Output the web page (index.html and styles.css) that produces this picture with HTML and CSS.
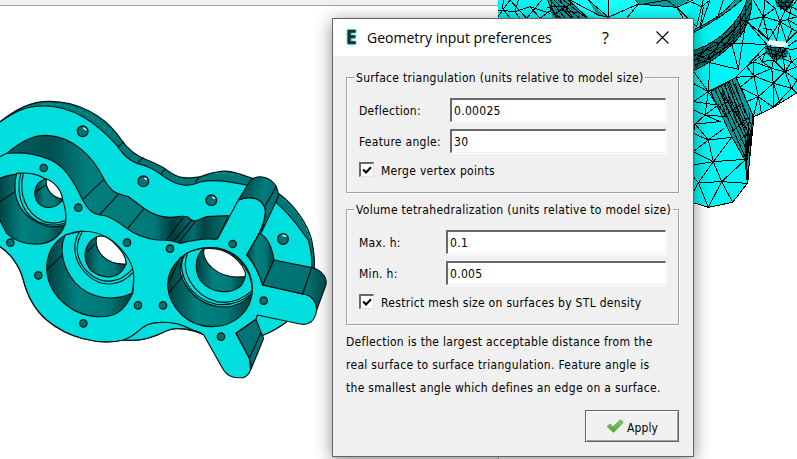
FILE: index.html
```
<!DOCTYPE html>
<html lang="en">
<head>
<meta charset="utf-8">
<title>Geometry input preferences</title>
<link rel="stylesheet" href="styles.css">
</head>
<body>
<svg class="scene" viewBox="0 0 2391 1377" aria-hidden="true">
  <defs>
    <linearGradient id="wall" x1="0" x2="1"><stop offset="0" stop-color="#003f3f"/><stop offset=".35" stop-color="#008080"/><stop offset=".7" stop-color="#007777"/><stop offset="1" stop-color="#003b3b"/></linearGradient>
    <linearGradient id="pocket" x1="0" x2="1"><stop offset="0" stop-color="#006060"/><stop offset=".2" stop-color="#005050"/><stop offset=".36" stop-color="#007d7d"/><stop offset=".66" stop-color="#007b7b"/><stop offset=".75" stop-color="#003b3b"/><stop offset=".84" stop-color="#007070"/><stop offset=".89" stop-color="#004545"/><stop offset="1" stop-color="#007272"/></linearGradient>
    <linearGradient id="arm" x1="0" y1="0" x2="1" y2=".5"><stop offset="0" stop-color="#003c3c"/><stop offset=".6" stop-color="#007b7b"/><stop offset="1" stop-color="#006d6d"/></linearGradient>
    <linearGradient id="cap" x1="0" x2="1"><stop offset="0" stop-color="#007b7b"/><stop offset="1" stop-color="#004a4a"/></linearGradient>
  </defs>
  <path class="bar" d="M0 0H1494V15H0z"/><path class="bar-line" d="M0 16.5H1494"/>
  <path class="bar" d="M996 1372H1494V1377H996z"/><path class="bar-line" d="M1495 1371V1377"/>

  <g class="part">
    <path class="rim" d="M-6 370C50 325 95 303 150 304C240 305 310 350 350 400C372 432 390 455 420 470C450 485 480 494 500 510C530 532 550 537 585 532C605 533 620 520 650 516C690 507 720 523 765 538L835 580C890 620 925 680 935 720C944 765 945 790 942 810L860 965C840 980 815 995 790 1005L610 1003C580 990 530 978 500 992C455 1015 410 1025 370 1020C290 1038 200 1010 140 960C100 925 80 880 70 840C60 800 30 755 -6 737z"/>
    <path class="face" d="M-6 370C50 330 80 318 130 318C220 317 290 370 350 435C370 465 385 480 410 490C460 500 480 525 515 544C550 562 575 557 600 546C650 535 700 548 740 555L825 605C880 650 915 710 925 720C935 760 937 785 935 800L860 965C840 980 815 995 790 1005L610 1003C590 990 530 978 500 992C455 1015 410 1025 370 1020C290 1038 200 1010 140 960C100 925 80 880 70 840C60 800 30 755 -6 737z"/>
    <path class="line" d="M372 425L352 442M430 472L412 490M494 508L482 524M598 532L585 546M370 1020C420 1005 420 967 480 967C540 964 560 985 610 1003"/>
    <path class="glint" d="M125 313C230 306 290 355 344 412M645 520L720 525M850 597C890 630 920 675 936 728"/>
    <path class="wall pocket" d="M20 460C75 415 105 406 140 406C220 410 280 470 312 538C335 580 350 580 385 590C430 620 450 650 510 652C540 650 555 645 565 652C580 672 590 660 620 650L685 647L652 718C610 712 570 722 540 730C520 722 510 720 470 720C430 715 400 700 380 685C340 655 320 645 300 645C270 640 260 620 248 600C220 540 190 490 140 475C100 460 60 456 20 460z"/>
    <path class="line" d="M20 460L-4 472M312 538L248 598M355 583L298 645M433 625L383 685M550 652L498 722M575 660L520 725M585 665L536 729"/>

    <path class="wall" d="M-6 537C60 510 130 515 165 565C205 620 205 680 175 705C145 740 70 745 20 700L-6 650z"/>
    <path class="line" d="M0 605L42 577"/>
    <path class="face" d="M50 520C40 560 43 600 70 635C105 675 155 690 196 674C204 620 180 580 160 557C130 527 100 515 50 520z"/>
    <path class="line" d="M62 520C45 590 72 658 135 672Q170 680 196 668M70 520C55 580 76 640 130 664Q165 676 198 661"/>
    <path class="wall" d="M138 537C102 545 97 585 114 608C130 627 165 630 188 600L187 595z"/>
    <path class="void" d="M138 537C137 570 157 590 187 598C186 570 160 543 138 537z"/>
    <path class="line" d="M105 576L137 556"/>

    <path class="wall" d="M140 800C143 735 190 697 240 694C310 694 365 750 385 780C404 815 403 845 398 880C370 940 340 953 290 950C210 945 140 880 140 800z"/>
    <path class="face" d="M195 705C175 750 190 805 225 848C270 897 340 905 396 880C406 825 402 800 378 765C345 720 300 690 240 694z"/>
    <path class="line" d="M140 810L185 767M238 695C210 745 228 795 268 830C310 865 365 856 398 818M246 697C218 745 234 793 272 824C312 855 362 848 396 808"/>
    <path class="wall" d="M290 710C245 735 248 785 275 813C310 838 360 840 378 792z"/>
    <path class="void" d="M290 710C280 755 320 795 378 792C382 760 330 710 305 708z"/>
    <path class="line" d="M262 755L284 733"/>

    <path class="plate" d="M610 1003L665 1100C680 1130 700 1135 730 1133C750 1126 760 1100 748 1075L708 1000L768 958L772 945L900 972C925 977 945 965 950 930C950 905 935 885 908 882L788 855C775 815 760 785 740 765L775 705C783 688 805 640 793 620C780 592 750 587 715 600L652 718L560 760L500 900z"/>
    <path class="wall arm" d="M715 600L752 540C775 523 810 528 829 560Q836 575 834 592L783 700C783 688 805 640 793 620C780 592 750 587 715 600z"/>
    <path class="line" d="M829 560L795 618"/>
    <path class="wall" d="M778 700C810 715 818 755 822 780L788 855C775 815 760 785 740 765z"/>
    <path class="wall flat" d="M822 780L935 803L908 882L788 855z"/>
    <path class="wall cap" d="M935 803C970 812 985 838 976 860L950 930C950 905 935 885 908 882z"/>
    <path class="wall flat" d="M708 1000L768 958L786 1005L791 1015L752 1110L748 1075z"/>
    <path class="line" d="M783 998L748 1075"/>
    <path class="line" d="M652 718L715 600C750 587 780 592 793 620C805 640 783 688 775 705L740 765C760 785 775 815 788 855L908 882C935 885 950 905 950 930C945 965 925 977 900 972L772 945L768 958L708 1000L748 1075C760 1100 750 1126 730 1133C700 1135 680 1130 665 1100L610 1003"/>

    <path class="wall" d="M503 860C500 790 565 743 630 743C705 743 757 800 757 867C757 935 700 980 635 980C565 980 510 925 503 860z"/>
    <path class="face" d="M557 761C530 800 538 830 562 862C600 918 690 950 755 884C765 810 700 742 630 743Q588 744 557 761z"/>
    <path class="line" d="M505 850L542 770M551 765C530 820 568 895 650 913Q710 920 755 880M563 758C540 815 578 885 650 905Q705 916 757 872M505 880L552 824"/>
    <path class="wall" d="M611 746C582 770 585 815 600 840C630 880 690 885 722 858Q734 845 736 825z"/>
    <path class="void" d="M613 746C600 780 650 840 733 830C750 820 700 735 613 746z"/>
    <g class="holes">
      <circle cx="248" cy="394" r="16"/><circle cx="430" cy="544" r="16"/><circle cx="634" cy="601" r="16"/><circle cx="849" cy="717" r="16"/>
      <circle cx="131" cy="504" r="11"/><circle cx="235" cy="623" r="11"/><circle cx="698" cy="732" r="11"/><circle cx="510" cy="746" r="11"/><circle cx="489" cy="916" r="11"/><circle cx="791" cy="902" r="11"/><circle cx="663" cy="1010" r="11"/><circle cx="31" cy="728" r="11"/><circle cx="115" cy="826" r="11"/><circle cx="381" cy="728" r="11"/><circle cx="414" cy="916" r="11"/><circle cx="250" cy="970" r="11"/>
    </g>
    <path class="spark" d="M250 383l9 7M433 534l8 5M637 591l8 5M847 706l12 3"/>
  </g>

  <g class="mesh" transform="translate(1470 0)">
    <path class="sheet" d="M24 0H921V280L850 322L790 350L772 550L728 607L655 622L600 605V100H24z"/>
    <path class="glow" d="M205 0H610L580 70H350z"/>
    <path class="shade" d="M172 0L190 60H300L240 0zM295 0L350 55L320 45zM435 0L450 14L560 22L598 0zM610 98Q700 50 755 0H735Q690 55 610 90z"/>
    <path class="deep" d="M610 152Q690 125 735 65Q762 30 770 0H786Q785 80 725 135Q670 185 610 213z"/>
    <path class="shade side" d="M662 275L738 232L790 345L772 550L765 480L725 410z"/>
    <path class="deep" d="M826 140L890 145L897 160L880 178L850 180L827 158zM855 0H910L905 20L885 32L860 18z"/>
    <path class="hole" d="M835 120L890 126L896 138L870 142L832 132z"/>
    <path class="edge" d="M24 50L60 0L110 55L155 0M24 30L75 35L120 20L180 40M40 0L38 25L60 55M85 0L75 35L90 55M120 20L150 55L190 25M210 0L250 55M172 0L200 55M182 0L225 55M192 0L245 55M204 0L270 55M220 0L290 55M235 0L300 60M178 15L205 55M185 5L182 35L215 55M172 22L230 18L210 30L260 38M190 45L245 10M240 0L325 45L355 52L445 12L560 22L610 0M295 0L355 52L355 0M435 0L450 14L530 0L560 22M445 12L410 55M560 22L580 55M560 22L620 80L640 0M590 0L635 20L660 0M610 90Q690 55 735 0M610 98Q700 50 755 0M640 20L630 85L660 0M680 60L700 0"/>
    <path class="edge" d="M610 152Q690 125 735 65Q762 30 770 0M786 0Q785 80 725 135Q670 185 610 213M610 168Q690 140 740 80L782 10M610 182Q690 155 740 100L780 40M610 198Q690 165 735 115L775 60M610 160L655 180M640 145L620 205M670 128L725 130M655 150L690 160M700 110L660 180M735 65L730 125M750 45L750 110M765 15L768 75M615 180L670 128M640 190L710 105M690 160L760 50M740 65L775 60"/>
    <path class="edge" d="M725 130L830 133L768 62L745 208L660 188L610 178M725 130L745 208M660 188L655 275L610 213M655 180L725 130M768 62L820 50L790 0M768 62L835 120L820 50L825 0L855 25L820 50M820 50L870 65L855 25M870 65L835 120M870 65L890 126L921 95L870 65L921 50L885 32L870 65M835 120L805 90L820 50M890 126L905 90L895 60L921 75M895 60L905 20L921 0M905 20L921 30M845 90L860 120L870 65M845 90L820 85M855 0L885 32L910 0M860 18L905 20M865 0L900 25M858 8L908 8M875 0L872 28L895 0M885 0L890 30L905 5M895 138L921 120M897 150L921 145"/>
    <path class="edge" d="M655 275L738 232L826 140M738 232L792 228L790 185L830 155M738 232L750 262L792 228L805 290L755 265M790 185L770 200L792 228L850 250L845 205L790 185M845 205L792 228M805 290L850 250L850 322L805 290L790 350M805 290L770 305L755 265M805 290L815 342M850 250L885 215L845 205L850 180L885 215L921 200M850 250L905 265L885 215L921 240M850 250L870 310M850 322L905 265L921 280M905 265L921 240M850 180L815 185L845 205M880 178L885 215L905 185L880 178M897 160L905 185L921 175M905 185L921 200M827 158L815 185L805 165M826 140L897 145M827 158L890 170M840 135L850 180L870 142L880 178M855 142L860 182L890 145L850 170M830 133L845 175M826 145L885 160"/>
    <path class="edge" d="M662 275L725 410L765 480L772 550M655 275L610 250M655 275L610 305L680 315L655 275M655 275L645 345L610 330M645 345L685 315L710 350L645 345L615 372L690 365L645 345M615 372L655 420L702 385M615 372L610 400L655 420L725 412L670 485L610 455L655 420L670 485L765 478M610 385L615 372M670 485L610 495M670 485L625 548L695 545L765 480M670 485L695 545L772 550M728 607L695 545L655 622L625 548L610 530M625 548L610 575"/>
    <path class="edge" d="M675 268L765 470M684 263L770 450M693 258L772 430M702 253L776 420M710 249L780 410M718 244L784 400M726 239L786 380M690 275L745 350M700 350L755 310M710 300L770 390M725 395L778 350M695 258L710 330M705 253L740 370M715 245L758 380M735 250L765 340M765 400L773 540M777 370L768 500M788 345L774 540M765 480L785 380M768 500L788 360M780 340L766 470M690 320L720 300M740 430L770 400"/>
    <path class="edge" d="M738 232L790 348M662 275L738 232M610 608L655 622L728 607L772 550L792 350L850 322L921 278"/>
  </g>
</svg>

<main class="dialog">
  <header class="titlebar">
    <span class="logo">E</span>
    <h1 class="title">Geometry input preferences</h1>
    <span class="help">?</span>
    <svg class="close" viewBox="0 0 13 13"><path d="M.5.5l12 12M12.5.5l-12 12"/></svg>
  </header>
  <div class="content">
    <section class="group">
      <h2 class="legend"><span class="legend-text">Surface triangulation (units relative to model size)</span></h2>
      <div class="fields wide">
        <label>Deflection:</label><div class="input">0.00025</div>
        <label>Feature angle:</label><div class="input">30</div>
      </div>
      <div class="check"><span class="box"><svg viewBox="0 0 9 9"><path d="M.7 3.5L3.5 6.5L8.5 1.2"/></svg></span><span>Merge vertex points</span></div>
    </section>
    <section class="group second">
      <h2 class="legend"><span class="legend-text">Volume tetrahedralization (units relative to model size)</span></h2>
      <div class="fields">
        <label>Max. h:</label><div class="input">0.1</div>
        <label>Min. h:</label><div class="input">0.005</div>
      </div>
      <div class="check"><span class="box"><svg viewBox="0 0 9 9"><path d="M.7 3.5L3.5 6.5L8.5 1.2"/></svg></span><span>Restrict mesh size on surfaces by STL density</span></div>
    </section>
    <p class="note">Deflection is the largest acceptable distance from the<br>real surface to surface triangulation. Feature angle is<br>the smallest angle which defines an edge on a surface.</p>
    <button class="apply"><svg viewBox="0 0 18 15"><defs><linearGradient id="tick" x2="0" y2="1"><stop stop-color="#87ca78"/><stop offset="1" stop-color="#43a52b"/></linearGradient></defs><path d="M1 7.5L4 5L7 8L14 1Q16 1 17 3.5L7.5 13.5Z"/></svg><span>Apply</span></button>
  </div>
</main>
</body>
</html>
```
FILE: styles.css
```
* { box-sizing: border-box; }
body {
  margin: 0;
  width: 797px;
  height: 459px;
  padding: 18px 0 0 332px;
  overflow: hidden;
  background: #fff;
  color: #000;
  font: 12px/16px "DejaVu Sans Condensed", "DejaVu Sans", sans-serif;
  font-stretch: condensed;
  letter-spacing: .3px;
}
h1, h2, p { margin: 0; font-weight: normal; }

.scene { position: absolute; left: 0; top: 0; width: 797px; height: 459px; }
.bar { fill: #f0f0f0; }
.bar-line { fill: none; stroke: #a0a0a0; stroke-width: 3; }
.part path { stroke: #001414; stroke-width: 3.5; stroke-linejoin: round; }
.part .face { fill: #00dede; }
.part .rim { fill: #007777; }
.part .wall { fill: url(#wall); }
.part .pocket { fill: url(#pocket); }
.part .arm { fill: url(#arm); }
.part .flat { fill: #007474; }
.part .cap { fill: url(#cap); }
.part .void { fill: #fff; }
.part .line { fill: none; }
.part .plate { stroke: none; fill: #00dede; }
.part .glint { fill: none; stroke: #00b8b8; stroke-width: 2; stroke-dasharray: 14 8; }
.part .spark { fill: none; stroke: #fff; stroke-width: 4; }
.holes circle { fill: #007272; stroke: #001c1c; stroke-width: 4; }
.sheet { fill: #00f4f4; }
.glow { fill: #18ffff; }
.shade { fill: #009c9c; }
.deep { fill: #007272; }
.hole { fill: #fff; }
.edge { fill: none; stroke: #000; stroke-width: 3; shape-rendering: crispEdges; }

.dialog {
  position: relative;
  width: 362px;
  height: 439px;
  border: 1px solid #646464;
  background: #f0f0f0;
  box-shadow: 0 3px 16px rgba(0, 0, 0, .45);
}
.titlebar {
  display: flex;
  align-items: center;
  height: 37px;
  padding: 0 24px 0 13px;
  background: #fff;
  letter-spacing: 0;
}
.logo {
  width: 12px;
  margin-top: -2px;
  font: bold 19px/20px "Open Sans", sans-serif;
  color: #1e3030;
  -webkit-text-stroke: .4px #1e3030;
  text-shadow: 0 0 3px #20dede, 0 0 2px #20dede;
}
.title { margin-left: 9px; font: 14px/20px "Open Sans", sans-serif; white-space: nowrap; }
.help { margin-left: auto; margin-right: 47px; font: 16px/20px "Open Sans", sans-serif; }
.close { width: 13px; height: 13px; fill: none; stroke: #000; stroke-width: 1.1; }

.content { display: flex; flex-direction: column; padding: 21px 14px 0 13px; }
.group {
  height: 116px;
  padding: 0 12px;
  border: 1px solid #a0a0a0;
  box-shadow: 1px 1px 0 #fff, inset 1px 1px 0 #fff;
}
.second { margin-top: 16px; }
.legend { height: 20px; margin-top: -9px; font-size: 12px; line-height: 18px; white-space: nowrap; }
.legend-text { display: inline-block; margin-left: -5px; padding: 0 2px; background: #f0f0f0; }
.fields { display: grid; grid-template-columns: 87px 220px; grid-auto-rows: 24px; row-gap: 7px; margin-top: 9px; }
.fields.wide { grid-template-columns: 91px 216px; }
.fields label { line-height: 26px; white-space: nowrap; }
.input {
  height: 24px;
  padding: 0 2px;
  line-height: 23px;
  background: #fff;
  border: 2px solid;
  border-color: #696969 #f0f0f0 #f0f0f0 #696969;
  border-width: 2px 1px 1px 2px;
  box-shadow: 1px 1px 0 #fff;
}
.check { display: flex; gap: 7px; margin-top: 9px; line-height: 19px; white-space: nowrap; }
.box {
  width: 15px;
  height: 15px;
  padding: 2px 1px;
  background: #fff;
  border: 2px solid;
  border-color: #696969 #e3e3e3 #e3e3e3 #696969;
  border-width: 2px 1px 1px 2px;
}
.box svg { display: block; width: 10px; height: 9px; fill: none; stroke: #000; stroke-width: 2; }
.note { margin-top: 6px; line-height: 23px; white-space: nowrap; }
.apply {
  display: flex;
  align-items: center;
  justify-content: center;
  gap: 3px;
  align-self: flex-end;
  width: 94px;
  height: 32px;
  margin-top: 10px;
  padding: 3px 0 0;
  font: inherit;
  letter-spacing: .1px;
  color: #000;
  background: #f0f0f0;
  border: 1px solid #646464;
  box-shadow: inset 1px 1px 0 #fff, inset -1px -1px 0 #a0a0a0;
}
.apply svg { width: 18px; height: 15px; margin-top: -3px; fill: url(#tick); stroke: #55a744; stroke-width: .8; stroke-linejoin: round; }
```
